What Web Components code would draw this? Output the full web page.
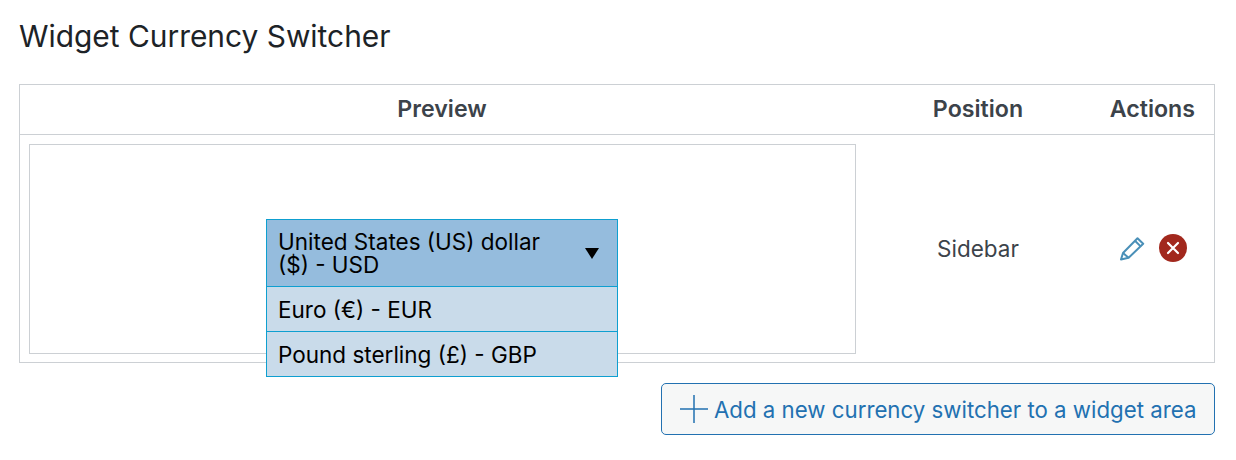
<!DOCTYPE html>
<html><head><meta charset="utf-8">
<style>
html,body{margin:0;background:#fff}
body{font-family:Inter,"Liberation Sans",sans-serif;color:#3c434a;width:1236px;height:460px;overflow:hidden}
</style></head><body>
<template id="t-page"><style>
:host{display:flex;flex-direction:column;padding:17px 21px 0 19px;box-sizing:border-box;width:1236px}
h1{margin:0 0 29px 0;font:400 29.9px/38px Inter,"Liberation Sans",sans-serif;color:#1d2327;letter-spacing:0}
.foot{display:flex;justify-content:flex-end;margin-top:20px}
</style><h1><slot name="title"></slot></h1><slot></slot><div class="foot"><slot name="foot"></slot></div></template>

<template id="t-table"><style>
:host{display:grid;grid-template-columns:846px 1fr 122px;grid-template-rows:50px 228px;border:1px solid #ccd0d4;width:1196px;box-sizing:border-box;height:279px;font-size:22.5px}
.h{display:flex;align-items:center;justify-content:center;font-weight:600;color:#3c434a;border-bottom:1px solid #ccd0d4;font-size:23.2px;padding:0 2px 1px 0;box-sizing:border-box}
.h.a{justify-content:flex-end;padding-right:19px}
.c{display:flex;align-items:center;justify-content:center}
.p{padding:9px 0 0 9px;box-sizing:border-box;display:block}
.pos{color:#3c434a;padding:0 2px 1px 0}
.act{justify-content:flex-start;padding:0 0 2px 27px;gap:14px;box-sizing:border-box}
</style>
<div class="h">Preview</div><div class="h">Position</div><div class="h a">Actions</div>
<div class="p"><slot name="preview"></slot></div>
<div class="c pos"><slot name="position"></slot></div>
<div class="c act"><slot name="actions"></slot></div></template>

<template id="t-preview"><style>
:host{display:block;width:827px;height:210px;border:1px solid #ccd0d4;box-sizing:border-box;padding:74px 0 0 236px}
</style><slot></slot></template>

<template id="t-switcher"><style>
:host{display:block;position:relative;width:352px;font-size:22.5px;color:#000;line-height:23px}
.cur{display:flex;align-items:center;justify-content:space-between;box-sizing:border-box;height:68px;border:1px solid #0e9fd0;background:#95bcdd;padding:0 18px 0 11px}
.txt{width:290px}
.arrow{width:0;height:0;border-left:7px solid transparent;border-right:7px solid transparent;border-top:11px solid #000;margin-top:1px}
.menu{position:absolute;left:0;right:0;top:68px;border:1px solid #0e9fd0;border-top:0;background:#c9dbea}
</style><div class="cur"><span class="txt"><slot name="current"></slot></span><span class="arrow"></span></div><div class="menu"><slot></slot></div></template>

<template id="t-option"><style>
:host{display:flex;align-items:center;height:44px;padding:1px 11px 0;box-sizing:border-box}
:host([divided]){height:45px;border-top:1px solid #0e9fd0}
</style><slot></slot></template>

<template id="t-addbtn"><style>
:host{display:inline-flex;align-items:center;box-sizing:border-box;height:52px;width:554px;border:1px solid #2271b1;border-radius:5px;background:#f6f7f7;color:#2271b1;font-size:22.25px;padding:0 0 0 18px;gap:6px;white-space:nowrap}
svg{flex:none;display:block}
</style><svg width="28" height="28" viewBox="0 0 28 28"><path d="M0 14H28M14 0V28" stroke="#2271b1" stroke-width="1.5" fill="none"/></svg><slot></slot></template>

<template id="t-edit"><style>:host{display:block;width:26px;height:26px}svg{display:block}</style>
<svg width="26" height="26" viewBox="0 0 26 26" fill="none" stroke="#4a90b8" stroke-width="2" stroke-linejoin="round"><path d="M2 24.5 4 18 18.5 3.2 24.2 8.8 9.6 22.8Z"/><path d="M4 18 9.6 22.8M16 5.8 21.6 11.4"/></svg></template>

<template id="t-del"><style>:host{display:block;width:28px;height:28px;position:relative}svg{display:block}</style>
<svg width="28" height="28" viewBox="0 0 28 28"><circle cx="14" cy="14" r="14" fill="#a2281d"/><path d="M9 9 19 19M19 9 9 19" stroke="#fff" stroke-width="2.2" stroke-linecap="round"/></svg></template>

<wc-page>
<span slot="title">Widget Currency Switcher</span>
<wc-table>
<wc-preview slot="preview"><wc-switcher><span slot="current">United States (US) dollar ($) - USD</span>
<wc-option>Euro (€) - EUR</wc-option><wc-option divided>Pound sterling (£) - GBP</wc-option></wc-switcher></wc-preview>
<span slot="position">Sidebar</span>
<wc-edit slot="actions"></wc-edit><wc-del slot="actions"></wc-del>
</wc-table>
<wc-addbtn slot="foot">Add a new currency switcher to a widget area</wc-addbtn>
</wc-page>
<script>
for(const [n,t] of [['wc-page','t-page'],['wc-table','t-table'],['wc-preview','t-preview'],['wc-switcher','t-switcher'],['wc-option','t-option'],['wc-addbtn','t-addbtn'],['wc-edit','t-edit'],['wc-del','t-del']]){
customElements.define(n,class extends HTMLElement{constructor(){super();this.attachShadow({mode:'open'}).appendChild(document.getElementById(t).content.cloneNode(true))}});
}
</script>
</body></html>
